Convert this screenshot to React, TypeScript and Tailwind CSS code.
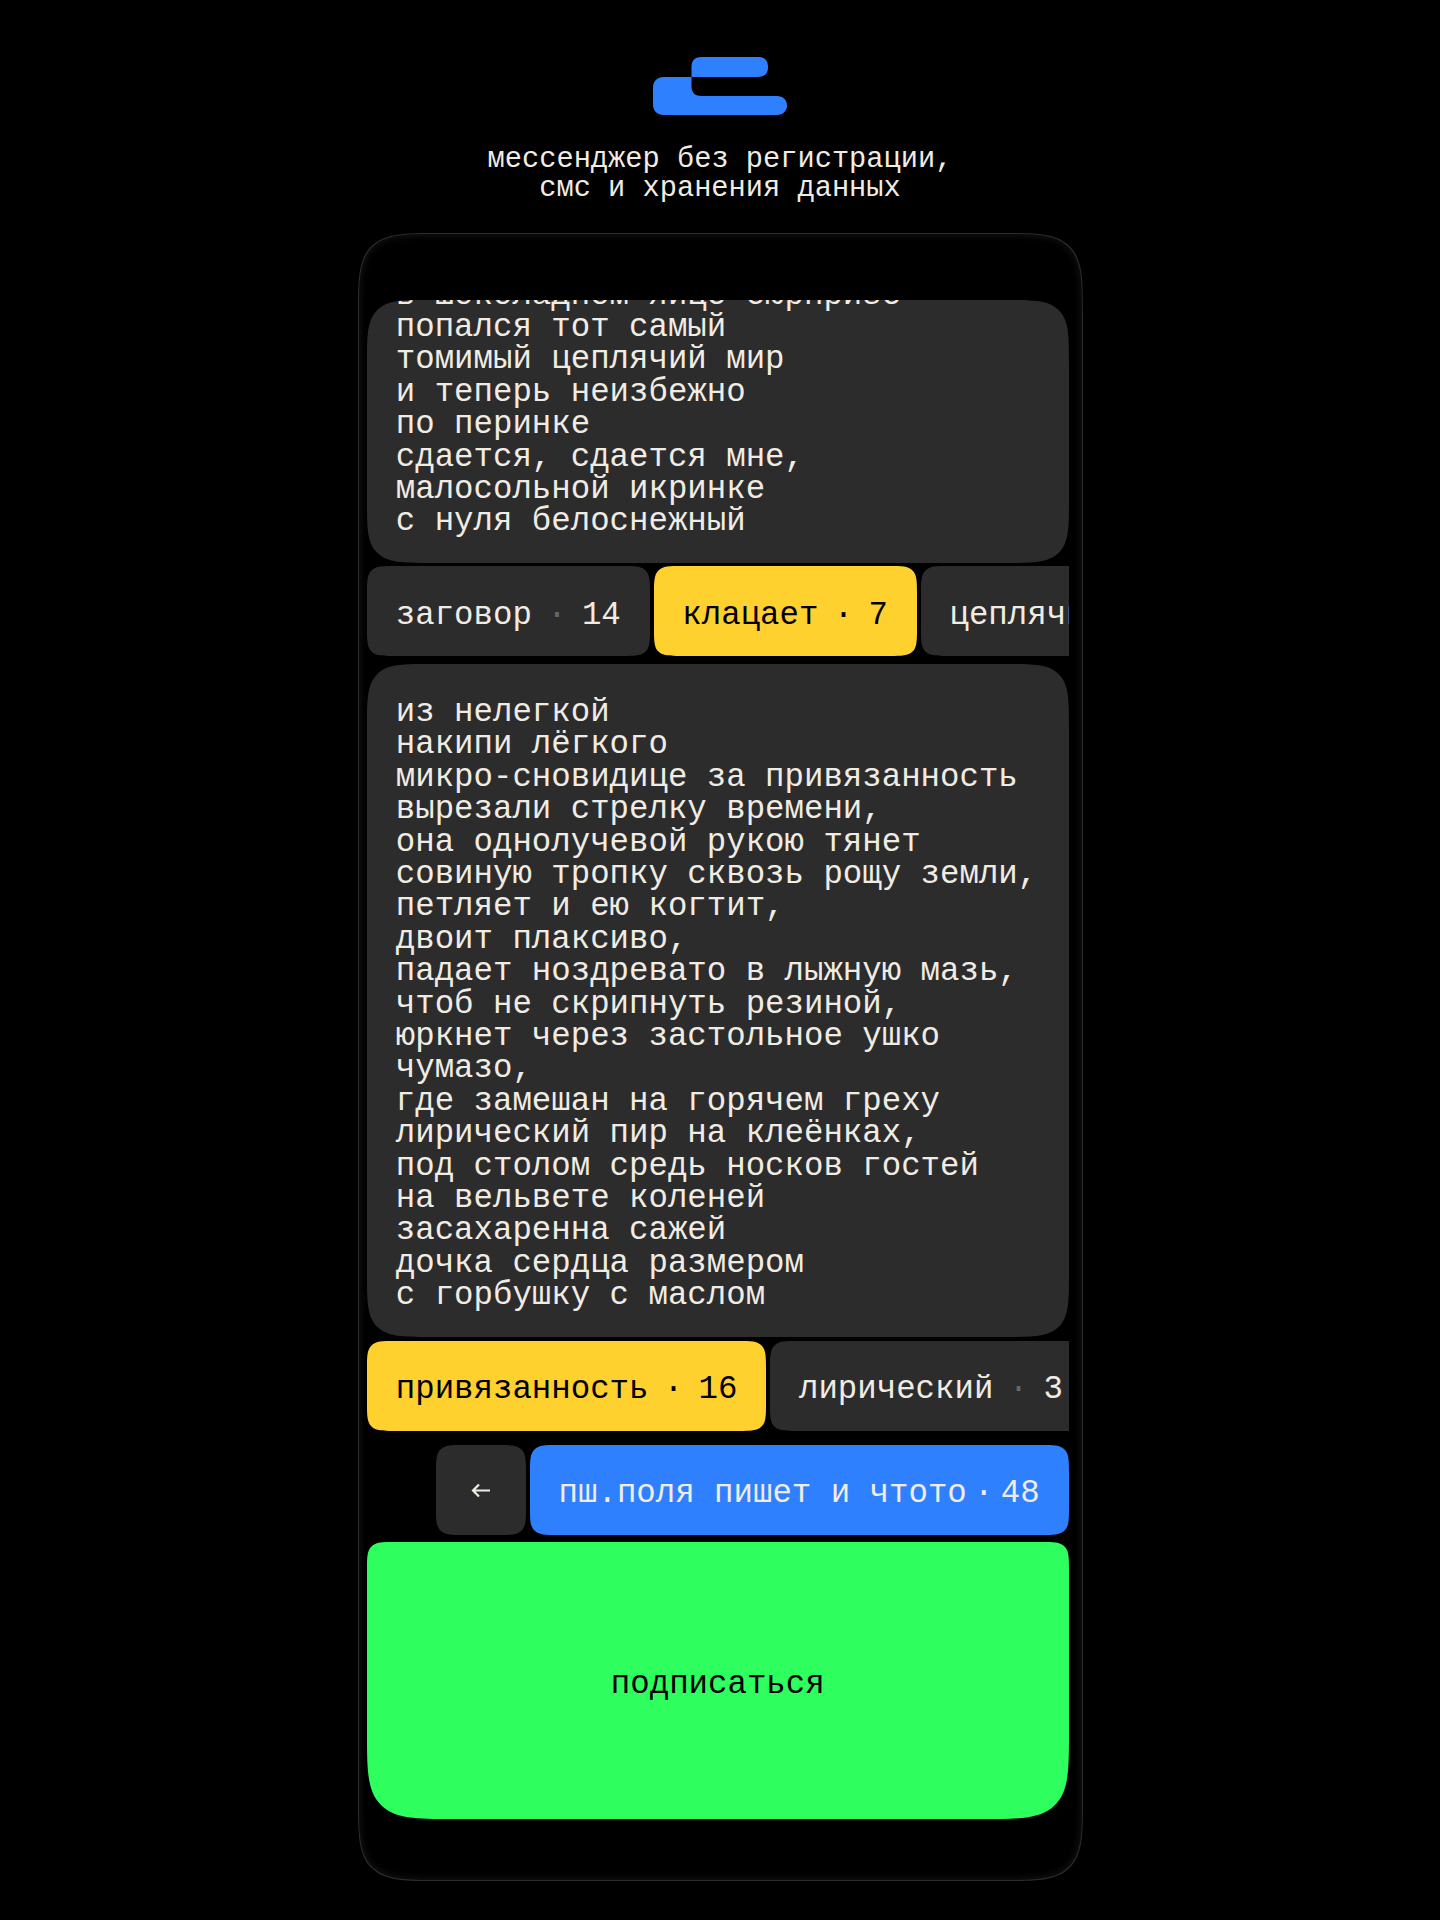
const FONT = "font-['Liberation_Mono',monospace]";

const TOP_POEM = [
  "в шоколадном яйце сюрпризе",
  "попался тот самый",
  "томимый цеплячий мир",
  "и теперь неизбежно",
  "по перинке",
  "сдается, сдается мне,",
  "малосольной икринке",
  "с нуля белоснежный",
];

const MAIN_POEM = [
  "из нелегкой",
  "накипи лёгкого",
  "микро-сновидице за привязанность",
  "вырезали стрелку времени,",
  "она однолучевой рукою тянет",
  "совиную тропку сквозь рощу земли,",
  "петляет и ею когтит,",
  "двоит плаксиво,",
  "падает ноздревато в лыжную мазь,",
  "чтоб не скрипнуть резиной,",
  "юркнет через застольное ушко",
  "чумазо,",
  "где замешан на горячем греху",
  "лирический пир на клеёнках,",
  "под столом средь носков гостей",
  "на вельвете коленей",
  "засахаренна сажей",
  "дочка сердца размером",
  "с горбушку с маслом",
];

function Logo() {
  return (
    <svg width="134" height="58" viewBox="0 0 134 58" className="block">
      <path
        fill="#2f80ff"
        d="M38.500 20V10C38.500 3 42 0 49 0H105C112 0 115 4 115 10C115 16 112 20 105 20H38.500Z"
      />
      <path
        fill="#2f80ff"
        d="M11 20H38.500V29C38.500 36 42 39 49 39H124C130 39 134 43 134 48.500C134 54 130 58 124 58H11C4 58 0 54 0 47V31C0 24 4 20 11 20Z"
      />
    </svg>
  );
}

function Chip({
  label,
  count,
  active,
}: {
  label: string;
  count: number;
  active?: boolean;
}) {
  return (
    <div
      className={`flex h-[90px] shrink-0 items-center rounded-[28px] px-[28.8px] pt-[10px] [corner-shape:squircle] ${
        active ? "bg-[#ffd12e] text-black" : "bg-[#2c2c2c] text-[#f0ece4]"
      }`}
    >
      <span>{label}</span>
      <span
        className={`w-[50px] text-center ${
          active ? "text-black" : "text-[#666666]"
        }`}
      >
        ·
      </span>
      <span>{count}</span>
    </div>
  );
}

export default function App() {
  return (
    <div className={`min-h-[1920px] bg-black ${FONT}`}>
      <header className="flex flex-col items-center pt-[57px]">
        <Logo />
        <p className="mt-[31px] text-center text-[28.7px] leading-[28.8px] text-[#f0ece4]">
          мессенджер без регистрации,
          <br />
          смс и хранения данных
        </p>
      </header>

      <main className="mx-auto mt-[29px] h-[1648px] w-[725px] rounded-[84px] border border-[#2c2c2c] pt-[66px] pr-[13px] pb-[61px] pl-[8.5px] text-[32.4px] leading-[32.4px] shadow-[inset_0_0_8px_rgba(255,255,255,0.1)] [corner-shape:squircle]">
        <div className="flex h-full flex-col">
          <div className="flex min-h-0 flex-1 flex-col justify-end overflow-hidden rounded-[64px] bg-[#2c2c2c] px-[28.8px] pb-[24px] text-[#f0ece4] [corner-shape:squircle]">
            {TOP_POEM.map((line) => (
              <p key={line} className="shrink-0 whitespace-pre">
                {line}
              </p>
            ))}
          </div>

          <div className="mt-[3px] flex shrink-0 gap-1 overflow-hidden">
            <Chip label="заговор" count={14} />
            <Chip label="клацает" count={7} active />
            <Chip label="цеплячий" count={5} />
          </div>

          <div className="mt-2 shrink-0 rounded-[64px] bg-[#2c2c2c] px-[28.8px] pt-[33px] pb-[24px] text-[#f0ece4] [corner-shape:squircle]">
            {MAIN_POEM.map((line) => (
              <p key={line} className="whitespace-pre">
                {line}
              </p>
            ))}
          </div>

          <div className="mt-1 flex shrink-0 gap-1 overflow-hidden">
            <Chip label="привязанность" count={16} active />
            <Chip label="лирический" count={3} />
          </div>

          <div className="mt-[14px] flex shrink-0 justify-end gap-1">
            <button className="flex h-[90px] w-[90px] items-center justify-center rounded-[28px] bg-[#2c2c2c] pt-[2px] text-[#f0ece4] [corner-shape:squircle]">
              <svg
                width="19"
                height="15"
                viewBox="0 0 19 15"
                fill="none"
                stroke="currentColor"
                strokeWidth="2.2"
              >
                <path d="M8 1.500L2 7.500L8 13.500M2 7.500H19" />
              </svg>
            </button>
            <div className="flex h-[90px] items-center rounded-[28px] bg-[#2f80ff] px-[28.8px] pt-[10px] whitespace-pre text-[#f0ece4] [corner-shape:squircle]">
              <span>пш.поля пишет и чтото</span>
              <span className="w-[34px] text-center">·</span>
              <span>48</span>
            </div>
          </div>

          <button className="mt-[7px] flex h-[277px] shrink-0 items-center justify-center rounded-t-[28px] rounded-b-[88px] bg-[#2eff5e] pt-[10px] text-black [corner-shape:squircle]">
            подписаться
          </button>
        </div>
      </main>
    </div>
  );
}
